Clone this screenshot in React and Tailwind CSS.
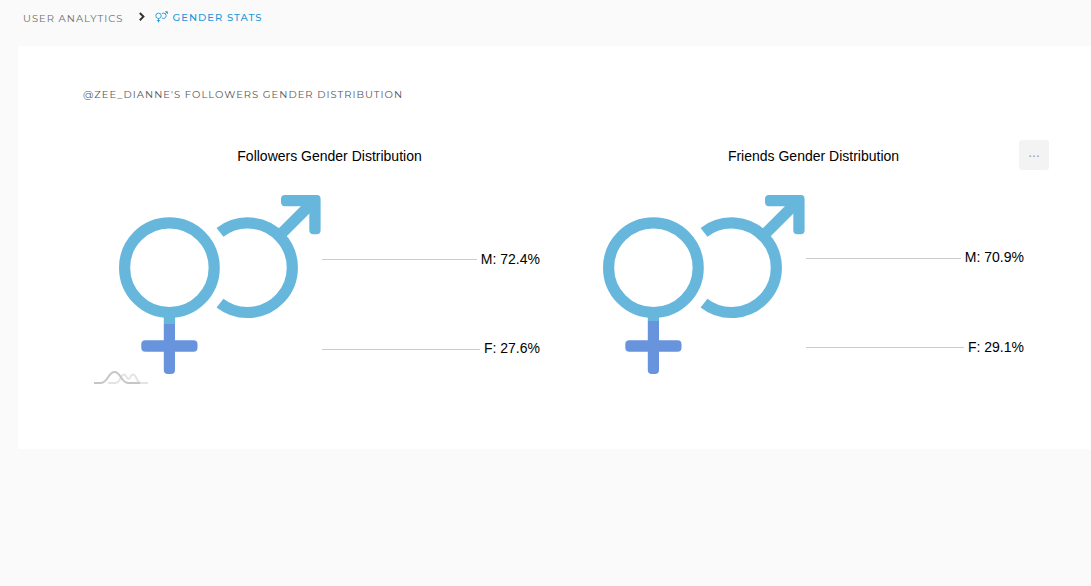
import React, { useId } from 'react';

const charts = [
  { title: 'Followers Gender Distribution', male: 72.4, female: 27.6 },
  { title: 'Friends Gender Distribution', male: 70.9, female: 29.1 },
];

const ICON_HEIGHT = 179;

/**
 * Interlocked female + male symbol, filled from the top by the male share
 */
const GenderPictorial = ({ male }) => {
  const maskId = useId();
  const split = Math.floor((ICON_HEIGHT * male) / 100);

  return (
    <svg width="202" height="179" viewBox="0 0 202 179" className="shrink-0" aria-hidden="true">
      <mask id={maskId} maskUnits="userSpaceOnUse" x="0" y="0" width="202" height="179">
        <g fill="none" stroke="#fff" strokeWidth="11.2">
          <circle cx="50.4" cy="72.7" r="44.8" />
          <path d="M101 37.35A44.8 44.8 0 1 1 101 108.05" />
          <path d="M163.5 37.5L190 11" />
        </g>
        <g fill="#fff">
          <path d="M166 0H198Q201.6 0 201.6 4V35Q201.6 39.3 197.6 39.3H194.5Q190.3 39.3 190.3 35V11.2H166Q162 11.2 162 7V4Q162 0 166 0Z" />
          <path d="M44.8 120H56V175Q56 179 52 179H48.8Q44.8 179 44.8 175Z" />
          <rect x="22.3" y="145.3" width="56.2" height="11.4" rx="4" />
        </g>
      </mask>
      <g mask={`url(#${maskId})`}>
        <rect width="202" height={split} fill="#67b7dc" />
        <rect y={split} width="202" height={ICON_HEIGHT - split} fill="#6794dc" />
      </g>
    </svg>
  );
};

const SliceLabel = ({ name, value }) => (
  <div className="flex items-center gap-1" style={{ flexGrow: value, flexBasis: 0 }}>
    <span className="h-px flex-1 bg-[#cccccc]" />
    <span className="pb-0.5 text-sm leading-4 text-black">
      {name}: {value}%
    </span>
  </div>
);

const GenderChart = ({ title, male, female }) => (
  <figure className="pl-[31px] pr-8">
    <figcaption className="text-center text-sm leading-5 text-black">{title}</figcaption>
    <div className="mt-[29px] flex">
      <GenderPictorial male={male} />
      <div className="ml-px flex flex-1 flex-col">
        <SliceLabel name="M" value={male} />
        <SliceLabel name="F" value={female} />
      </div>
    </div>
  </figure>
);

const GenderIcon = () => (
  <svg width="13" height="12" viewBox="0 0 13 12" className="mt-px" fill="none" stroke="currentColor" strokeWidth="0.9" aria-hidden="true">
    <circle cx="3.5" cy="4.8" r="2.7" />
    <path d="M3.5 7.5V11.4M1.8 9.6H5.2" />
    <path d="M6.9 2.6A2.7 2.7 0 1 1 6.9 7M10.2 2.9L12.2 0.9M10.2 0.7H12.4V2.9" />
  </svg>
);

const Breadcrumb = () => (
  <nav
    aria-label="Breadcrumb"
    className="flex h-[46px] items-start pl-[23px] pt-[10px] font-[Montserrat,Inter,sans-serif] text-[10px] leading-4 tracking-[1px]"
  >
    <a href="#analytics" className="pt-px text-[#6c6e70]">USER ANALYTICS</a>
    <svg width="8" height="10" viewBox="0 0 8 10" className="ml-[14px] mt-[2px]" fill="none" stroke="#333" strokeWidth="2" aria-hidden="true">
      <path d="M1.8 1L5.4 4.6L1.8 8.2" />
    </svg>
    <a href="#gender" aria-current="page" className="ml-[9px] flex gap-[5px] font-medium text-[#1e98dc]">
      <GenderIcon />
      GENDER STATS
    </a>
  </nav>
);

const ChartLogo = () => (
  <svg width="54" height="14" viewBox="0 0 54 14" className="absolute bottom-0 left-[6px]" fill="none" strokeWidth="2" aria-hidden="true">
    <path d="M14 12H21C27 12 26 3.5 30 3.5C33 3.5 32 8 34.5 8C37 8 36 3.5 39 3.5C43 3.5 42 12 47 12H54" stroke="#e4e4e4" />
    <path d="M0 12H7C14 12 14 1 20.5 1C27 1 27 12 34 12H46" stroke="#c6c6c6" />
  </svg>
);

const App = () => (
  <div className="min-h-screen bg-[#fafafa]">
    <Breadcrumb />
    <main className="ml-[18px] bg-white pb-16 pt-[41px]">
      <h1 className="ml-[65px] font-[Montserrat,Inter,sans-serif] text-[10px] leading-4 tracking-[1px] text-[#55575a]">
        @ZEE_DIANNE'S FOLLOWERS GENDER DISTRIBUTION
      </h1>
      <section className="relative ml-[70px] mr-[35px] mt-[43px] grid grid-cols-2 pb-[11px] font-['Liberation_Sans',Arial,sans-serif]">
        {charts.map((chart) => (
          <GenderChart key={chart.title} {...chart} />
        ))}
        <button
          type="button"
          aria-label="Export menu"
          className="absolute -top-[6px] right-[7px] flex size-[30px] items-center justify-center rounded-[3px] bg-[#f3f3f3] pb-1.5 text-sm leading-4 text-[#a0a0a0]"
        >
          ...
        </button>
        <ChartLogo />
      </section>
    </main>
  </div>
);

export default App;
